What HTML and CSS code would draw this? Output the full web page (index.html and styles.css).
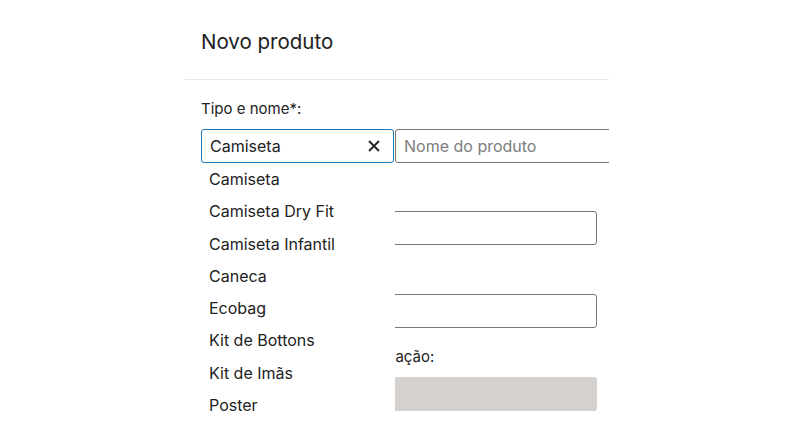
FILE: index.html
```html
<!DOCTYPE html>
<html lang="pt-BR">
<head>
    <meta charset="UTF-8">
    <title>Novo produto</title>
    <link rel="stylesheet" href="styles.css">
</head>
<body>

<div class="modal">
    <div class="modal-header">
        <h2>Novo produto</h2>
    </div>
    <div class="modal-body">
        <label class="field-label">Tipo e nome*:</label>
        <div class="type-row">
            <div class="combo">
                <span class="combo-value">Camiseta</span>
                <svg class="combo-clear" width="14" height="14" viewBox="0 0 14 14">
                    <path d="M2 2 L12 12 M12 2 L2 12" stroke="#222" stroke-width="1.8" fill="none"/>
                </svg>
                <ul class="combo-list">
                    <li>Camiseta</li>
                    <li>Camiseta Dry Fit</li>
                    <li>Camiseta Infantil</li>
                    <li>Caneca</li>
                    <li>Ecobag</li>
                    <li>Kit de Bottons</li>
                    <li>Kit de Imãs</li>
                    <li>Poster</li>
                </ul>
            </div>
            <input class="name-input" type="text" placeholder="Nome do produto">
        </div>

        <label class="field-label">Preço*:</label>
        <input class="text-input" type="text">

        <label class="field-label">Estoque:</label>
        <input class="text-input" type="text">

        <label class="field-label">Artes da capa para a divulgação:</label>
        <div class="disabled-box"></div>
    </div>
</div>

</body>
</html>
```

FILE: styles.css
```css
body {
    margin: 0;
    font-family: Inter, 'Noto Sans', sans-serif;
    background: #fff;
    color: #222;
}

.modal {
    margin-left: 185px;
    width: 424px;
    height: 446px;
    overflow: hidden;
}

.modal-header {
    height: 79px;
    border-bottom: 1px solid #e9e9e9;
    padding-left: 16px;
    display: flex;
    align-items: center;
}

.modal-header h2 {
    margin: 0;
    font-size: 20.5px;
    font-weight: 400;
    color: #1d1d1d;
    position: relative;
    top: 2px;
}

.modal-body {
    padding: 19px 12px 0 16px;
}

.field-label {
    display: block;
    font-size: 15px;
    color: #222;
    height: 20px;
    line-height: 20px;
    margin-bottom: 10px;
}

.type-row {
    display: flex;
    width: 420px;
    margin-bottom: 18px;
}

.combo {
    position: relative;
    width: 194px;
    height: 34px;
    box-sizing: border-box;
    border: 1px solid #1a7cb8;
    border-radius: 3px;
    display: flex;
    align-items: center;
    padding: 0 12px 0 8px;
}

.combo-value {
    flex: 1;
    font-size: 16px;
}

.combo-list {
    position: absolute;
    top: 33px;
    left: -6px;
    width: 199px;
    margin: 0;
    padding: 0;
    list-style: none;
    background: #fff;
    z-index: 2;
}

.combo-list li {
    height: 32.3px;
    line-height: 32.3px;
    padding-left: 13px;
    font-size: 16px;
    color: #222;
}

.name-input {
    width: 226px;
    height: 34px;
    box-sizing: border-box;
    margin-left: 1px;
    border: 1px solid #7a776d;
    border-radius: 3px;
    padding: 0 8px;
    font-family: inherit;
    font-size: 16px;
}

.name-input::placeholder {
    color: #7d7d7d;
}

.text-input {
    display: block;
    width: 396px;
    height: 34px;
    box-sizing: border-box;
    border: 1px solid #7a776d;
    border-radius: 3px;
    margin-bottom: 19px;
}

.disabled-box {
    width: 396px;
    height: 34px;
    background: #d4d1ce;
    border-radius: 3px;
}
```
